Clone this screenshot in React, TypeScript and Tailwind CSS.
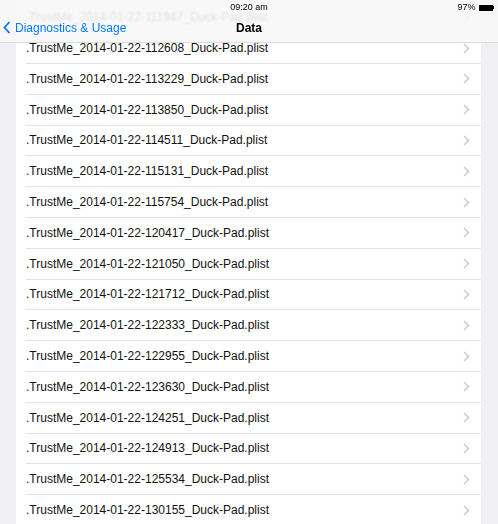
import React from "react";

const stamps = [
  "111947", "112608", "113229", "113850", "114511", "115131", "115754",
  "120417", "121050", "121712", "122333", "122955", "123630", "124251",
  "124913", "125534", "130155",
];

function Chevron() {
  return (
    <svg width="7" height="11" viewBox="0 0 7 11" className="shrink-0">
      <path d="M1 1l4.5 4.5L1 10" fill="none" stroke="#c7c7cc" strokeWidth="1.4" />
    </svg>
  );
}

function Row({ stamp }: { stamp: string }) {
  return (
    <div className="h-[30.8px] pl-[10px]">
      <div className="flex h-full items-center justify-between border-b border-[#e3e3e6] pr-[11px]">
        <span className="text-[12px] text-[#111]">.TrustMe_2014-01-22-{stamp}_Duck-Pad.plist</span>
        <Chevron />
      </div>
    </div>
  );
}

export default function App() {
  return (
    <div
      className="relative h-[524px] w-[498px] overflow-hidden bg-[#efeff4]"
      style={{ fontFamily: '"Liberation Sans", Arial, sans-serif' }}
    >
      <div className="ml-[16px] w-[465px] bg-white pt-[2.4px]">
        {stamps.map((s) => (
          <Row key={s} stamp={s} />
        ))}
      </div>

      {/* translucent status + navigation bar floating over the list */}
      <header className="absolute left-0 right-0 top-0 h-[43px] border-b border-[#dcdcdc] bg-[#f7f7f7]/[0.9] backdrop-blur-[1px]">
        <div className="relative h-[12px]">
          <span className="absolute left-0 right-0 top-[1px] text-center text-[9px] text-black">09:20 am</span>
          <div className="absolute right-[4px] top-[1px] flex items-center gap-[3px]">
            <span className="text-[9px] text-black">97%</span>
            <div className="flex items-center">
              <div className="h-[6px] w-[14px] bg-black" />
              <div className="h-[3px] w-[1.5px] bg-black" />
            </div>
          </div>
        </div>
        <div className="relative flex h-[31px] items-center">
          <div className="flex items-center pl-[3px] text-[#007aff]">
            <svg width="8" height="13" viewBox="0 0 8 13">
              <path d="M6.5 1L1.5 6.5 6.5 12" fill="none" stroke="#007aff" strokeWidth="1.8" />
            </svg>
            <span className="ml-[4px] text-[12px]">Diagnostics &amp; Usage</span>
          </div>
          <span className="absolute left-0 right-0 text-center text-[12px] font-bold text-black">Data</span>
        </div>
      </header>
    </div>
  );
}
